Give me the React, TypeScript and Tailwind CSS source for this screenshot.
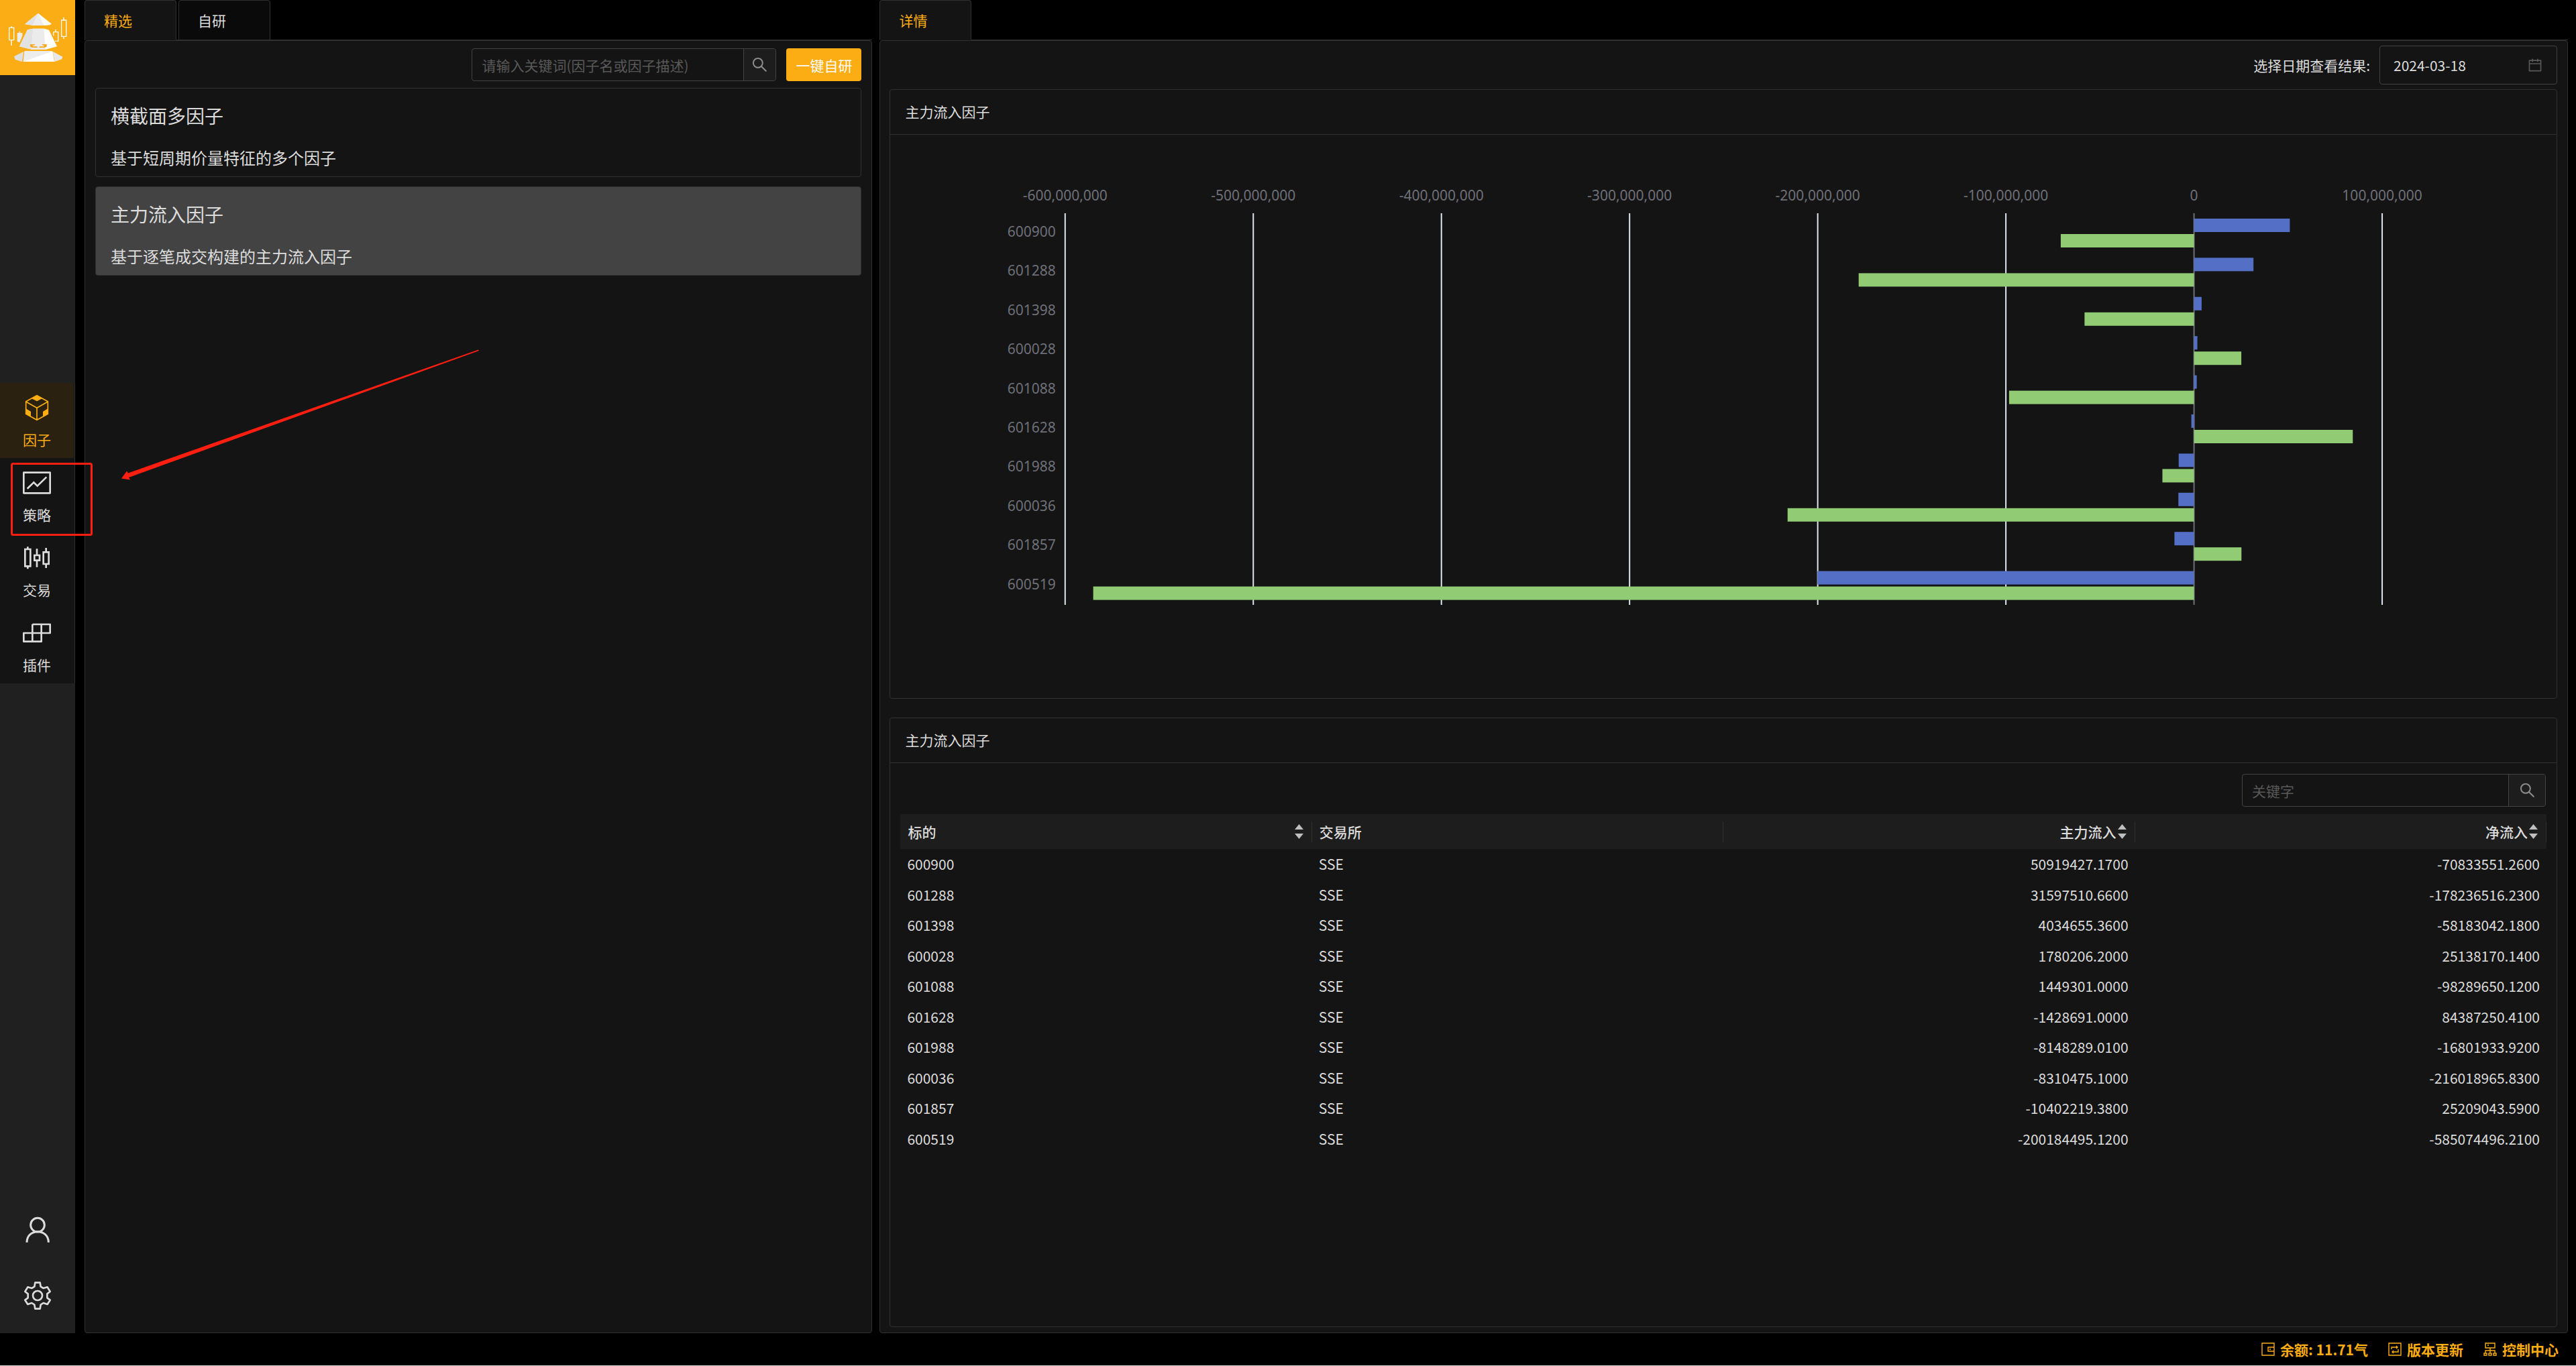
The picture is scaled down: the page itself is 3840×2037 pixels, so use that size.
import { useState } from "react"
import type { ReactNode } from "react"
import { AiOutlineCalendar, AiOutlineSearch } from "react-icons/ai"

type Row = {
  code: string
  exchange: string
  main: number
  net: number
}

const rows: Row[] = [
  { code: "600900", exchange: "SSE", main: 50919427.17, net: -70833551.26 },
  { code: "601288", exchange: "SSE", main: 31597510.66, net: -178236516.23 },
  { code: "601398", exchange: "SSE", main: 4034655.36, net: -58183042.18 },
  { code: "600028", exchange: "SSE", main: 1780206.2, net: 25138170.14 },
  { code: "601088", exchange: "SSE", main: 1449301, net: -98289650.12 },
  { code: "601628", exchange: "SSE", main: -1428691, net: 84387250.41 },
  { code: "601988", exchange: "SSE", main: -8148289.01, net: -16801933.92 },
  { code: "600036", exchange: "SSE", main: -8310475.1, net: -216018965.83 },
  { code: "601857", exchange: "SSE", main: -10402219.38, net: 25209043.59 },
  { code: "600519", exchange: "SSE", main: -200184495.12, net: -585074496.21 },
]

const factors = [
  { title: "横截面多因子", desc: "基于短周期价量特征的多个因子" },
  { title: "主力流入因子", desc: "基于逐笔成交构建的主力流入因子" },
]

/* Icons */
const Logo = () => (
  <svg viewBox="0 0 336 336" className="size-28 bg-[#fbad15]" role="img" aria-label="logo">
    <g fill="none" stroke="#fff" strokeWidth="4">
      <path d="M41 124H62V179H41ZM51 117V124M51 179V204" />
      <path d="M239 143H260V184H246M239 143V160M249 132V143" />
      <path d="M275 90H296V163H275ZM285 78V90M285 163V174" />
    </g>
    <path d="M77 147H86V140H90V147H100V160L88 190L77 186Z" fill="#ececec" />
    <path d="M171 59L231 107L222 112L197 114H147L111 108Z" fill="#fff" />
    <path d="M171 59L147 113L111 108Z" fill="#e2e2e2" />
    <path d="M171 59L197 114H147Z" fill="#ededed" />
    <path d="M123 133L148 128H197L219 134L255 208L205 221H141L87 208Z" fill="#fff" />
    <path d="M123 133L148 128L141 221L87 208Z" fill="#e2e2e2" />
    <path d="M148 128H197L203 221H141Z" fill="#ebebeb" />
    <path
      d="M135 198H157L152 203H145L148 208H166L168 213H143L135 208ZM209 198H187L192 203H199L196 208H177L175 213H201L209 208Z"
      fill="#f5a81c"
    />
    <path d="M63 252L106 231L99 276L68 266Z" fill="#e0e0e0" />
    <path d="M110 229H235L243 276H104Z" fill="#fff" />
    <path d="M110 229H235L104 276Z" fill="#ececec" />
    <path d="M236 230L280 254L276 265L244 276Z" fill="#e8e8e8" />
  </svg>
)

const FactorIcon = () => (
  <svg viewBox="102 81 126 126" className="size-[42px]" fill="none" stroke="currentColor" strokeWidth="5">
    <path d="M165 89L214 116V172L165 199L116 172V116ZM116 117L165 145L214 117M165 145V199" />
    <path d="M165 88L190 102L165 115L140 102ZM116 148L138 161V185L116 172ZM214 148L192 161V185L214 172Z" fill="currentColor" stroke="none" />
  </svg>
)

const StrategyIcon = () => (
  <svg viewBox="102 417 126 126" className="size-[42px]" fill="none" stroke="currentColor" strokeWidth="8">
    <path d="M106 434H224V526H106Z" strokeLinejoin="round" />
    <path d="M122 506L151 478L167 494L208 454" />
  </svg>
)

const TradeIcon = () => (
  <svg viewBox="102 753 126 126" className="size-[42px]" fill="none" stroke="currentColor" strokeWidth="8">
    <path d="M112 777H136V853H112ZM124 766V777M124 853V865" />
    <path d="M154 804H177V827H154ZM165 775V804M165 827V857" />
    <path d="M194 790H218V843H194ZM206 771V790M206 843V861" />
  </svg>
)

const PluginIcon = () => (
  <svg viewBox="102 1089 126 126" className="size-[42px]" fill="none" stroke="currentColor" strokeWidth="8" strokeLinejoin="round">
    <path d="M145 1113H224V1152H106V1190H185V1113M145 1113V1190" />
  </svg>
)

const UserIcon = () => (
  <svg viewBox="105 99 126 126" className="size-[42px]" fill="none" stroke="currentColor" strokeWidth="9">
    <circle cx="168" cy="140" r="31" />
    <path d="M120 218C120 154 217 154 217 218" />
  </svg>
)

const SettingIcon = () => (
  <svg viewBox="105 392 126 126" className="size-[42px]" fill="none" stroke="currentColor" strokeWidth="8" strokeLinejoin="round">
    <path d="M157 397H179L182 415L194 422L212 417L224 437L211 447V465L224 475L212 494L194 488L182 496L179 514H157L154 496L142 488L124 494L112 475L125 465V447L112 437L124 417L142 422L154 415Z" />
    <circle cx="168" cy="455" r="21" />
  </svg>
)

const WalletIcon = () => (
  <svg viewBox="0 0 20 20" className="size-5" fill="none" stroke="currentColor" strokeWidth="1.4">
    <path d="M1 1H19V19H1ZM19 7H10V13H19M12 10H14" />
  </svg>
)

const UpdateIcon = () => (
  <svg viewBox="0 0 20 20" className="size-5" fill="none" stroke="currentColor" strokeWidth="1.4">
    <path d="M1 1H19V19H1ZM5 10V7H14M12 5L14 7L12 9M15 10V14H6M8 12L6 14L8 16" />
  </svg>
)

const ControlIcon = () => (
  <svg viewBox="0 0 20 20" className="size-5" fill="none" stroke="currentColor" strokeWidth="1.4">
    <path d="M3 1H17V8H3ZM10 8V16M3 16V12H17V16M6 4H8M1 16H5V19H1ZM8 16H12V19H8ZM15 16H19V19H15Z" />
  </svg>
)

const SortIcon = () => (
  <svg viewBox="0 0 13 22" className="h-[22px] w-[13px]" fill="#bfbfbf" aria-hidden="true">
    <path d="M6.5 0L13 8H0ZM6.5 22L0 14H13Z" />
  </svg>
)

const menus = [
  { label: "因子", icon: <FactorIcon /> },
  { label: "策略", icon: <StrategyIcon /> },
  { label: "交易", icon: <TradeIcon /> },
  { label: "插件", icon: <PluginIcon /> },
]

const Sidebar = () => {
  const [current, setCurrent] = useState("因子")

  return (
    <aside className="flex w-28 shrink-0 flex-col bg-[#202020]">
      <Logo />
      <nav className="mt-[459px] border-r border-[#303030] bg-[#141414] pr-px">
        {menus.map((m) => (
          <button
            key={m.label}
            onClick={() => setCurrent(m.label)}
            className={`flex h-28 w-full flex-col items-center gap-3 pt-4 leading-7 ${
              current === m.label ? "bg-[#2b2111] text-[#fcad14]" : "text-[#dcdcdc]"
            }`}
          >
            {m.icon}
            {m.label}
          </button>
        ))}
      </nav>
      <div className="mt-auto flex flex-col items-center gap-14 pb-[35px] text-[#dcdcdc]">
        <button aria-label="用户">
          <UserIcon />
        </button>
        <button aria-label="设置">
          <SettingIcon />
        </button>
      </div>
    </aside>
  )
}

type TabsProps = {
  items: string[]
  active: string
  onChange?: (value: string) => void
}

const Tabs = ({ items, active, onChange }: TabsProps) => (
  <div role="tablist" className="flex h-[60px] gap-[3px] border-b border-[#303030]">
    {items.map((t) => (
      <button
        key={t}
        role="tab"
        aria-selected={t === active}
        onClick={() => onChange?.(t)}
        className={`h-[60px] w-[137px] rounded-t border border-[#303030] pl-7 text-left ${
          t === active ? "border-b-[#141414] bg-[#141414] text-[#fcad14]" : "bg-[#0a0a0a] text-[#dcdcdc]"
        }`}
      >
        {t}
      </button>
    ))}
  </div>
)

type SearchBoxProps = {
  placeholder: string
  className: string
  buttonClassName: string
}

const SearchBox = ({ placeholder, className, buttonClassName }: SearchBoxProps) => (
  <div className={`flex h-[49px] rounded border border-[#434343] ${className}`}>
    <input
      aria-label={placeholder}
      placeholder={placeholder}
      className="min-w-0 flex-1 bg-transparent px-3.5 text-[#dcdcdc] outline-none placeholder:text-[#595959]"
    />
    <button
      aria-label="搜索"
      className={`flex items-center justify-center rounded-r border-l border-[#434343] bg-[#1d1d1d] text-[#8c8c8c] ${buttonClassName}`}
    >
      <AiOutlineSearch className="size-[27px]" />
    </button>
  </div>
)

const Card = ({ title, children }: { title: string; children: ReactNode }) => (
  <section className="flex-1 rounded border border-[#303030]">
    <h2 className="flex h-[67px] items-center border-b border-[#303030] px-[22px] pb-0.5">{title}</h2>
    {children}
  </section>
)

/* Horizontal bars, x is in percent so that the plot follows the card width */
const MIN = -600000000
const MAX = 100000000
const PLOT_TOP = 117
const BAND = 58.4
const ticks = [-6, -5, -4, -3, -2, -1, 0, 1].map((n) => n * 100000000)

const toX = (v: number) => 10.5 + (79.05 * (v - MIN)) / (MAX - MIN)

const Bar = ({ value, y, color }: { value: number; y: number; color: string }) => (
  <rect
    x={`${Math.min(toX(value), toX(0))}%`}
    y={y}
    width={`${Math.abs(toX(value) - toX(0))}%`}
    height="20"
    fill={color}
  />
)

const FlowChart = () => (
  <svg className="h-[800px] w-full font-['Noto_Sans','Noto_Sans_CJK_SC',sans-serif] text-[21px]" fill="#6e7079">
    {ticks.map((t) => (
      <g key={t}>
        <text x={`${toX(t)}%`} y="98" textAnchor="middle">
          {t.toLocaleString("en-US")}
        </text>
        <line
          x1={`${toX(t)}%`}
          x2={`${toX(t)}%`}
          y1={PLOT_TOP}
          y2={PLOT_TOP + BAND * 10}
          stroke={t === 0 ? "#6e7079" : "#e0e6f1"}
          strokeWidth="2"
        />
      </g>
    ))}
    <svg x="10.5%" className="overflow-visible">
      {rows.map((r, i) => (
        <text key={r.code} x="-14" y={PLOT_TOP + BAND * i + 35} textAnchor="end">
          {r.code}
        </text>
      ))}
    </svg>
    {rows.map((r, i) => (
      <g key={r.code}>
        <Bar value={r.main} y={PLOT_TOP + BAND * i + 8} color="#5470c6" />
        <Bar value={r.net} y={PLOT_TOP + BAND * i + 31} color="#91cc75" />
      </g>
    ))}
  </svg>
)

const columns = [
  { title: "标的", sort: true, right: false },
  { title: "交易所", sort: false, right: false },
  { title: "主力流入", sort: true, right: true },
  { title: "净流入", sort: true, right: true },
]

const FlowTable = () => (
  <table className="mt-[11px] w-full table-fixed">
    <thead>
      <tr className="h-[52px] bg-[#1d1d1d]">
        {columns.map((c) => (
          <th key={c.title} className="p-0 font-medium">
            <div
              className={`flex h-[31px] items-center gap-0.5 border-r border-[#303030] pr-3 pl-[11px] ${
                c.right ? "justify-end" : "justify-between"
              }`}
            >
              {c.title}
              {c.sort && <SortIcon />}
            </div>
          </th>
        ))}
      </tr>
    </thead>
    <tbody>
      {rows.map((r) => (
        <tr key={r.code} className="h-[46px] even:h-[45px]">
          <td className="px-2.5 pt-0 pb-0.5">{r.code}</td>
          <td className="px-2.5 pt-0 pb-0.5">{r.exchange}</td>
          <td className="px-2.5 pt-0 pb-0.5 text-right">{r.main.toFixed(4)}</td>
          <td className="px-2.5 pt-0 pb-0.5 text-right">{r.net.toFixed(4)}</td>
        </tr>
      ))}
    </tbody>
  </table>
)

const FactorList = () => {
  const [tab, setTab] = useState("精选")
  const [selected, setSelected] = useState(1)

  return (
    <div className="flex flex-[7] flex-col">
      <Tabs items={["精选", "自研"]} active={tab} onChange={setTab} />
      <div className="flex flex-1 flex-col rounded border border-[#303030] bg-[#141414] px-[15px] pt-[11px]">
        <div className="flex justify-end gap-[15px]">
          <SearchBox placeholder="请输入关键词(因子名或因子描述)" className="w-[454px]" buttonClassName="w-12" />
          <button className="h-[49px] w-28 rounded bg-[#fcad14] text-white">一键自研</button>
        </div>
        <div className="mt-2.5 flex flex-col gap-3.5">
          {factors.map((f, i) => (
            <button
              key={f.title}
              onClick={() => setSelected(i)}
              className={`flex h-[133px] flex-col gap-[22px] rounded border border-[#303030] px-[22px] pt-[18px] text-left ${
                i === selected ? "bg-[#434343]" : ""
              }`}
            >
              <span className="text-[28px] leading-[44px]">{f.title}</span>
              <span className="text-2xl leading-[38px]">{f.desc}</span>
            </button>
          ))}
        </div>
      </div>
    </div>
  )
}

const Detail = () => (
  <div className="flex flex-[15] flex-col">
    <Tabs items={["详情"]} active="详情" />
    <div className="flex flex-1 flex-col rounded border border-[#303030] bg-[#141414] pt-[7px] pr-[15px] pb-2 pl-3.5">
      <div className="flex items-center justify-end">
        <label htmlFor="date" className="mr-3.5">
          选择日期查看结果:
        </label>
        <div className="flex h-[58px] w-[265px] items-center rounded border border-[#434343] px-5">
          <input id="date" readOnly value="2024-03-18" className="min-w-0 flex-1 bg-transparent outline-none" />
          <AiOutlineCalendar className="size-6 text-[#595959]" />
        </div>
      </div>
      <div className="mt-[7px] flex flex-1 flex-col gap-7">
        <Card title="主力流入因子">
          <FlowChart />
        </Card>
        <Card title="主力流入因子">
          <div className="px-[15px] pt-4">
            <SearchBox placeholder="关键字" className="mr-px ml-auto w-[453px]" buttonClassName="w-[55px]" />
            <FlowTable />
          </div>
        </Card>
      </div>
    </div>
  </div>
)

const Footer = () => (
  <footer className="flex h-[49px] items-center justify-end gap-[30px] border-b border-[#d5d9d2] pr-[26px] font-bold text-[#fcad14]">
    <span className="flex items-center gap-2">
      <WalletIcon />
      余额: 11.71气
    </span>
    <button className="flex items-center gap-2">
      <UpdateIcon />
      版本更新
    </button>
    <button className="flex items-center gap-2">
      <ControlIcon />
      控制中心
    </button>
  </footer>
)

/* Red box and arrow that point at the strategy menu */
const Guide = () => (
  <svg className="pointer-events-none absolute top-0 left-0 h-[820px] w-[740px]" aria-hidden="true">
    <rect x="17.5" y="691.5" width="119" height="106" rx="2" fill="none" stroke="#ff1e10" strokeWidth="3" />
    <path d="M181 713.5L189 702.5L191 705.5L713 521.5L714 523L192 712L194 715.5Z" fill="#ff1e10" />
  </svg>
)

const App = () => {
  return (
    <div className="relative flex min-h-screen flex-col bg-black font-['Noto_Sans_CJK_SC',sans-serif] text-[21px] leading-8 text-[#dcdcdc]">
      <div className="flex flex-1">
        <Sidebar />
        <main className="flex flex-1 gap-[11px] pr-3 pl-3.5">
          <FactorList />
          <Detail />
        </main>
      </div>
      <Footer />
      <Guide />
    </div>
  )
}

export default App
